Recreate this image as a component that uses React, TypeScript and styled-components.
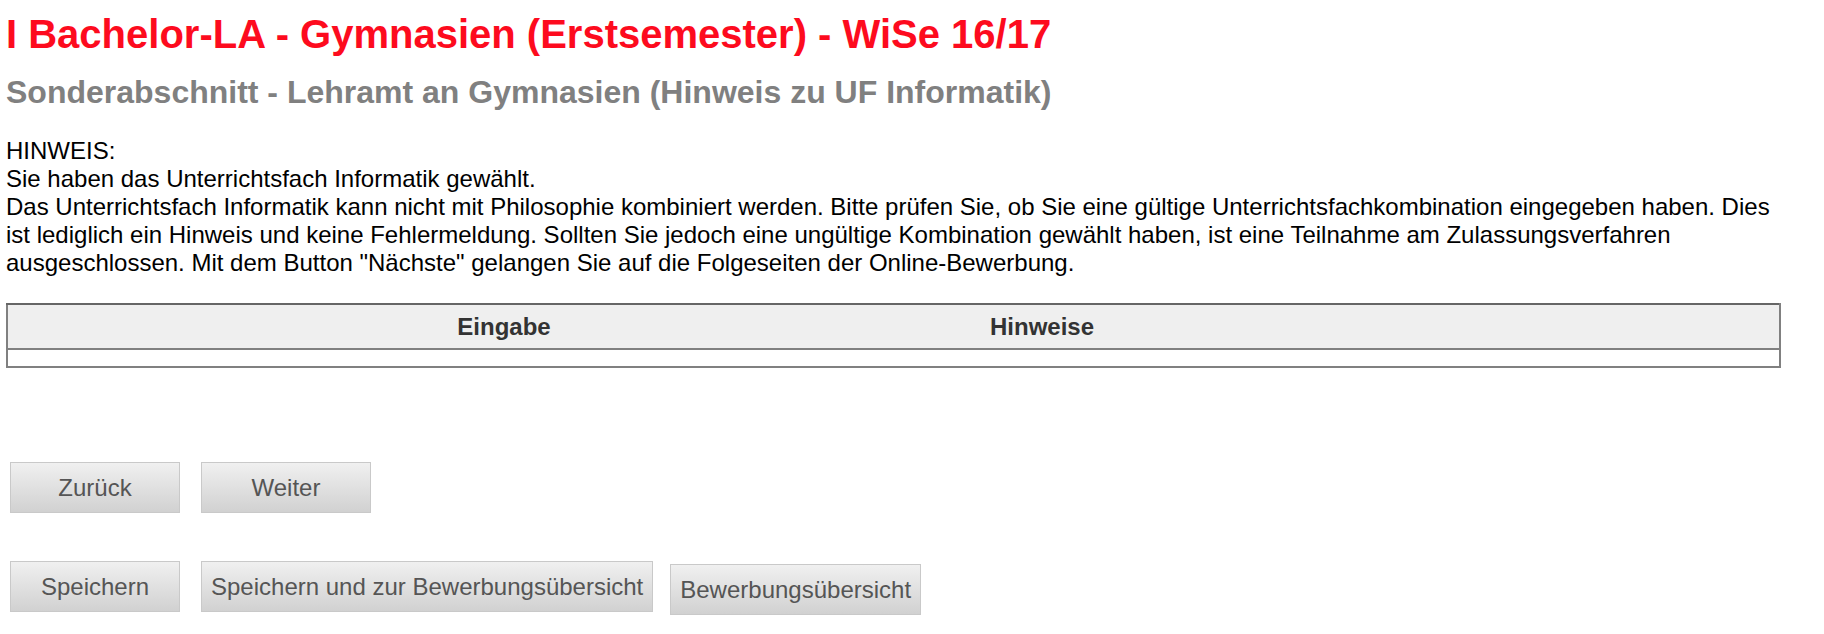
import styled, { createGlobalStyle } from "styled-components";

const GlobalStyle = createGlobalStyle`
  html, body {
    margin: 0;
    padding: 0;
    background: #fff;
  }
  body {
    font-family: "Liberation Sans", Arial, Helvetica, sans-serif;
    color: #000;
  }
`;

const Page = styled.div`
  width: 1775px;
  padding: 12px 0 0 6px;
`;

const Title = styled.h1`
  margin: 0;
  font-size: 40px;
  font-weight: bold;
  color: #fd0b1e;
`;

const SubTitle = styled.h2`
  margin: 17px 0 0;
  font-size: 32px;
  font-weight: bold;
  color: #808080;
`;

const Notice = styled.div`
  margin-top: 26px;
  font-size: 24px;
`;

const Table = styled.table`
  margin-top: 26px;
  width: 100%;
  border-collapse: collapse;
  border-top: 2px solid #666;
  border-left: 2px solid #808080;
  border-right: 2px solid #808080;
  border-bottom: 2px solid #808080;
  table-layout: fixed;
`;

const HeadCell = styled.th`
  background: #efefef;
  color: #333;
  font-size: 24px;
  font-weight: bold;
  text-align: center;
  padding: 8px 0 7px;
  border-bottom: 2px solid #808080;
`;

const EmptyCell = styled.td`
  height: 16px;
  padding: 0;
`;

interface RowProps {
  $top: number;
}

const ButtonRow = styled.div<RowProps>`
  display: flex;
  align-items: flex-start;
  gap: 21px;
  margin-top: ${(p) => p.$top}px;
  padding-left: 4px;
`;

interface ButtonProps {
  $link?: boolean;
}

const Button = styled.button<ButtonProps>`
  box-sizing: border-box;
  height: 51px;
  min-width: 170px;
  padding: 0 9px;
  margin-top: ${(p) => (p.$link ? "3px" : "0")};
  margin-left: ${(p) => (p.$link ? "-4px" : "0")};
  border: 1px solid #c9c9c9;
  background: linear-gradient(#f0f0f0, #d1d1d1);
  font-family: "Liberation Sans", Arial, Helvetica, sans-serif;
  font-size: 24px;
  line-height: 27px;
  color: #555;
  cursor: pointer;
`;

export default function App() {
  return (
    <>
      <GlobalStyle />
      <Page>
        <Title>I Bachelor-LA - Gymnasien (Erstsemester) - WiSe 16/17</Title>
        <SubTitle>
          Sonderabschnitt - Lehramt an Gymnasien (Hinweis zu UF Informatik)
        </SubTitle>
        <Notice>
          HINWEIS:
          <br />
          Sie haben das Unterrichtsfach Informatik gewählt.
          <br />
          Das Unterrichtsfach Informatik kann nicht mit Philosophie kombiniert
          werden. Bitte prüfen Sie, ob Sie eine gültige
          Unterrichtsfachkombination eingegeben haben. Dies ist lediglich ein
          Hinweis und keine Fehlermeldung. Sollten Sie jedoch eine ungültige
          Kombination gewählt haben, ist eine Teilnahme am Zulassungsverfahren
          ausgeschlossen. Mit dem Button "Nächste" gelangen Sie auf die
          Folgeseiten der Online-Bewerbung.
        </Notice>
        <Table>
          <colgroup>
            <col style={{ width: 247 }} />
            <col style={{ width: 500 }} />
            <col style={{ width: 576 }} />
            <col />
          </colgroup>
          <thead>
            <tr>
              <HeadCell />
              <HeadCell>Eingabe</HeadCell>
              <HeadCell>Hinweise</HeadCell>
              <HeadCell />
            </tr>
          </thead>
          <tbody>
            <tr>
              <EmptyCell colSpan={4} />
            </tr>
          </tbody>
        </Table>
        <ButtonRow $top={94}>
          <Button>Zurück</Button>
          <Button>Weiter</Button>
        </ButtonRow>
        <ButtonRow $top={48}>
          <Button>Speichern</Button>
          <Button>Speichern und zur Bewerbungsübersicht</Button>
          <Button $link>Bewerbungsübersicht</Button>
        </ButtonRow>
      </Page>
    </>
  );
}
